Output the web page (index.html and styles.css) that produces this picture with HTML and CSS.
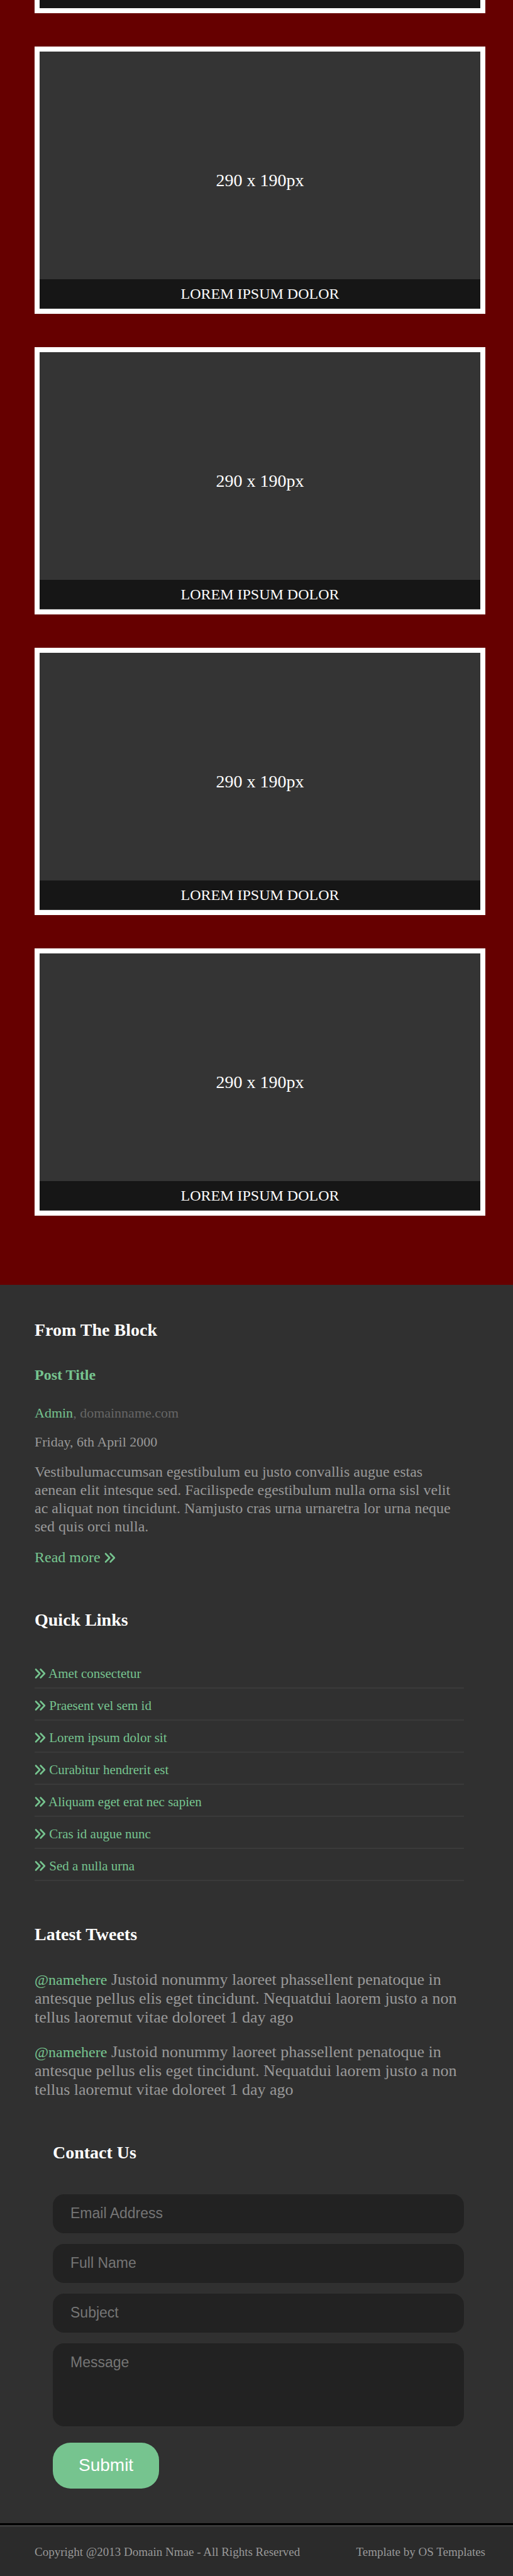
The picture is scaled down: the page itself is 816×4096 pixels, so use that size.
FILE: index.html
```html
<!DOCTYPE html>
<html lang="en">
<head>
<meta charset="utf-8">
<meta name="viewport" content="width=device-width, initial-scale=1">
<title>Portfolio</title>
<link rel="stylesheet" href="styles.css">
</head>
<body>
<svg class="sprite" aria-hidden="true">
  <symbol id="angles" viewBox="0 0 18 18">
    <path d="M2 2.5 8.3 9 2 15.5M9.6 2.5 15.9 9 9.6 15.5" fill="none" stroke="currentColor" stroke-width="2.6" stroke-linecap="round" stroke-linejoin="round"/>
  </symbol>
</svg>
<main class="gallery">
  <div class="card-end"></div>
  <figure class="card"><div class="thumb">290 x 190px</div><figcaption class="caption">LOREM IPSUM DOLOR</figcaption></figure>
  <figure class="card"><div class="thumb">290 x 190px</div><figcaption class="caption">LOREM IPSUM DOLOR</figcaption></figure>
  <figure class="card"><div class="thumb">290 x 190px</div><figcaption class="caption">LOREM IPSUM DOLOR</figcaption></figure>
  <figure class="card"><div class="thumb">290 x 190px</div><figcaption class="caption">LOREM IPSUM DOLOR</figcaption></figure>
</main>
<footer class="footer">
  <section class="block">
    <h2 class="title">From The Block</h2>
    <h3 class="post-title">Post Title</h3>
    <p class="author"><a href="#">Admin</a>, domainname.com</p>
    <p class="date"><time datetime="2000-04-06">Friday, 6th April 2000</time></p>
    <p class="excerpt">Vestibulumaccumsan egestibulum eu justo convallis augue estas aenean elit intesque sed. Facilispede egestibulum nulla orna sisl velit ac aliquat non tincidunt. Namjusto cras urna urnaretra lor urna neque sed quis orci nulla.</p>
    <p class="more"><a href="#">Read more <svg class="icon"><use href="#angles"/></svg></a></p>
  </section>
  <section class="block">
    <h2 class="title">Quick Links</h2>
    <ul class="links">
      <li><a href="#"><svg class="icon"><use href="#angles"/></svg> Amet consectetur</a></li>
      <li><a href="#"><svg class="icon"><use href="#angles"/></svg> Praesent vel sem id</a></li>
      <li><a href="#"><svg class="icon"><use href="#angles"/></svg> Lorem ipsum dolor sit</a></li>
      <li><a href="#"><svg class="icon"><use href="#angles"/></svg> Curabitur hendrerit est</a></li>
      <li><a href="#"><svg class="icon"><use href="#angles"/></svg> Aliquam eget erat nec sapien</a></li>
      <li><a href="#"><svg class="icon"><use href="#angles"/></svg> Cras id augue nunc</a></li>
      <li><a href="#"><svg class="icon"><use href="#angles"/></svg> Sed a nulla urna</a></li>
    </ul>
  </section>
  <section class="block">
    <h2 class="title">Latest Tweets</h2>
    <div class="tweets">
      <p><a href="#">@namehere</a> Justoid nonummy laoreet phassellent penatoque in antesque pellus elis eget tincidunt. Nequatdui laorem justo a non tellus laoremut vitae doloreet 1 day ago</p>
      <p><a href="#">@namehere</a> Justoid nonummy laoreet phassellent penatoque in antesque pellus elis eget tincidunt. Nequatdui laorem justo a non tellus laoremut vitae doloreet 1 day ago</p>
    </div>
  </section>
  <section class="block contact">
    <h2 class="title">Contact Us</h2>
    <form class="form">
      <input class="field" type="email" placeholder="Email Address" aria-label="Email Address">
      <input class="field" type="text" placeholder="Full Name" aria-label="Full Name">
      <input class="field" type="text" placeholder="Subject" aria-label="Subject">
      <textarea class="field message" placeholder="Message" aria-label="Message"></textarea>
      <button class="submit" type="submit">Submit</button>
    </form>
  </section>
</footer>
<div class="copyright">
  <p>Copyright @2013 Domain Nmae - All Rights Reserved</p>
  <p>Template by OS Templates</p>
</div>
</body>
</html>
```
FILE: styles.css
```css
* { box-sizing: border-box; }
body {
  margin: 0;
  background: #2b2b2b;
  color: #999;
  font-family: "Liberation Serif", "Times New Roman", serif;
}
h2, h3, p, ul, figure { margin: 0; padding: 0; }
a { color: #76c48f; text-decoration: none; }
.sprite { display: none; }
.icon { width: 18px; height: 18px; vertical-align: -2px; }

.gallery {
  display: flex;
  flex-direction: column;
  gap: 53px;
  padding: 0 44px 110px 55px;
  background: #600;
}
.card-end {
  height: 21px;
  border: solid #fff;
  border-width: 0 8px 8px;
  background: #161616;
}
.card {
  padding-bottom: 1px;
  border: 8px solid #fff;
  background: #343434;
  color: #fff;
  text-align: center;
}
.thumb {
  display: flex;
  align-items: center;
  justify-content: center;
  height: 362px;
  padding-top: 48px;
  font-size: 28px;
  line-height: 32px;
}
.caption {
  padding: 9px 0;
  background: #161616;
  font-size: 24px;
  line-height: 28px;
}

.footer {
  display: flex;
  flex-direction: column;
  gap: 69px;
  padding: 56px 78px 55px 55px;
  background: #303030;
}
.title {
  color: #fff;
  font-size: 28px;
  line-height: 32px;
}
.post-title {
  margin-top: 41px;
  color: #76c48f;
  font-size: 24px;
  line-height: 28px;
}
.author, .date { font-size: 22px; line-height: 24px; }
.author { margin-top: 35px; color: #666; }
.date { margin-top: 22px; }
.excerpt, .more { font-size: 24px; line-height: 29px; }
.excerpt { margin-top: 21px; }
.more { margin-top: 20px; }
.links { margin-top: 42px; list-style: none; }
.links li {
  padding: 15px 0 10px;
  border-bottom: 2px solid #3a3a3a;
  font-size: 21px;
  line-height: 24px;
}
.tweets {
  display: grid;
  gap: 25px;
  margin-top: 41px;
  font-size: 26px;
  line-height: 30px;
}
.tweets a { font-size: 24px; }
.contact { padding-left: 29px; }
.form {
  display: flex;
  flex-direction: column;
  gap: 17px;
  margin-top: 50px;
}
.field {
  display: block;
  width: 100%;
  height: 62px;
  padding: 16px 28px 18px;
  border: 0;
  border-radius: 18px;
  background: #222;
  color: #999;
  font: 23px/28px "Liberation Sans", Arial, sans-serif;
  resize: none;
}
.field::placeholder { color: #757575; opacity: 1; }
.message { height: 132px; }
.submit {
  align-self: flex-start;
  margin-top: 9px;
  padding: 20px 41px 21px;
  border: 0;
  border-radius: 28px;
  background: #76c48f;
  color: #fff;
  font: 28px/32px "Liberation Sans", Arial, sans-serif;
}
.copyright {
  display: flex;
  justify-content: space-between;
  padding: 28px 44px 26px 55px;
  border-top: 3px solid #3a3a3a;
  box-shadow: 0 -3px 0 #000;
  margin-top: 3px;
  font-size: 19px;
  line-height: 24px;
}
```
